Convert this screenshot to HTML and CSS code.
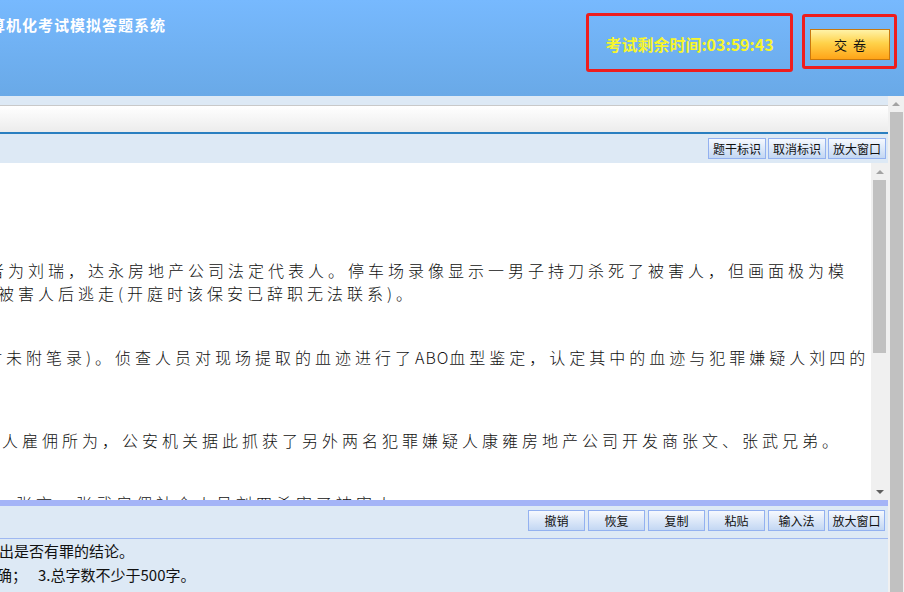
FILE: index.html
```html
<!DOCTYPE html>
<html lang="zh-CN">
<head>
  <meta charset="UTF-8" />
  <title>计算机化考试模拟答题系统</title>
  <link rel="stylesheet" href="styles.css">
</head>
<body>
  <div class="header">
    <div class="title">计算机化考试模拟答题系统</div>
    <div class="header-right">
      <div class="timer">考试剩余时间:03:59:43</div>
      <div class="submit-box">
        <button class="submit">交 卷</button>
      </div>
    </div>
  </div>

  <div class="main">
    <div class="page">
      <div class="strip"></div>
      <div class="tabbar"></div>

      <div class="toolbar top">
        <button class="tool">题干标识</button>
        <button class="tool">取消标识</button>
        <button class="tool">放大窗口</button>
      </div>

      <div class="question">
        <div class="qtext">
          <p class="l1">者为刘瑞，达永房地产公司法定代表人。停车场录像显示一男子持刀杀死了被害人，但画面极为模</p>
          <p class="l2">被害人后逃走(开庭时该保安已辞职无法联系)。</p>
          <p class="l3">时未附笔录)。侦查人员对现场提取的血迹进行了<span class="latin">ABO</span>血型鉴定，认定其中的血迹与犯罪嫌疑人刘四的</p>
          <p class="l4">人雇佣所为，公安机关据此抓获了另外两名犯罪嫌疑人康雍房地产公司开发商张文、张武兄弟。</p>
          <p class="l5">张文、张武雇佣社会人员刘四杀害了被害人。</p>
        </div>
        <div class="vscroll inner">
          <div class="arrow"><span class="tri up"></span></div>
          <div class="thumb"></div>
          <div class="track"></div>
          <div class="arrow"><span class="tri down"></span></div>
        </div>
      </div>

      <div class="answer-sep"></div>

      <div class="toolbar bottom">
        <button class="tool">撤销</button>
        <button class="tool">恢复</button>
        <button class="tool">复制</button>
        <button class="tool">粘贴</button>
        <button class="tool">输入法</button>
        <button class="tool">放大窗口</button>
      </div>

      <div class="hint">
        <p class="h1">出是否有罪的结论。</p>
        <p class="h2">确；<span class="num">3.总字数不少于500字。</span></p>
      </div>
    </div>

    <div class="vscroll outer">
      <div class="arrow"><span class="tri up"></span></div>
      <div class="thumb"></div>
    </div>
  </div>
</body>
</html>
```

FILE: styles.css
```css
* {
  box-sizing: border-box;
}
body {
  margin: 0;
  width: 904px;
  height: 592px;
  overflow: hidden;
  font-family: "Noto Sans CJK SC", "Liberation Sans", sans-serif;
  background: #dde9f5;
}
p {
  margin: 0;
}

/* header */
.header {
  height: 96px;
  display: flex;
  align-items: flex-start;
  padding-right: 7px;
  background: linear-gradient(#77b9fe, #69a9e7);
  overflow: hidden;
}
.title {
  margin-left: -26px;
  padding-top: 14px;
  color: #fff;
  font-size: 15px;
  font-weight: bold;
  letter-spacing: 1px;
  line-height: 22px;
  white-space: nowrap;
}
.header-right {
  margin-left: auto;
  display: flex;
  align-items: flex-start;
  gap: 9px;
}
.timer {
  margin-top: 13px;
  width: 207px;
  height: 59px;
  padding-top: 3px;
  border: 3px solid #ee1d1d;
  border-radius: 3px;
  display: flex;
  align-items: center;
  justify-content: center;
  color: #f7f52c;
  font-size: 16px;
  font-weight: bold;
  white-space: nowrap;
}
.submit-box {
  margin-top: 14px;
  width: 95px;
  height: 55px;
  padding: 12px 0 0 5px;
  border: 3px solid #ee1d1d;
  border-radius: 3px;
}
.submit {
  width: 80px;
  height: 31px;
  padding: 0;
  border: 1px solid #c9780e;
  background: linear-gradient(#fff3a8, #ffd24a 45%, #ffa418);
  font-family: inherit;
  font-size: 13px;
  word-spacing: 3px;
  color: #111;
}

/* main area */
.main {
  display: flex;
  height: 496px;
}
.page {
  flex: 1;
  display: flex;
  flex-direction: column;
  overflow: hidden;
}
.strip {
  height: 9px;
  background: #dde9f5;
}
.tabbar {
  height: 29px;
  border-top: 1px solid #c9c9c9;
  border-bottom: 2px solid #2a7fc0;
  background: linear-gradient(#ffffff, #ececec);
}
.toolbar {
  display: flex;
  justify-content: flex-end;
  align-items: center;
  background: #dde9f5;
}
.toolbar.top {
  height: 29px;
  gap: 2px;
  padding-right: 2px;
}
.toolbar.bottom {
  height: 33px;
  gap: 3px;
  padding: 0 3px 3px 0;
  border-bottom: 1px solid #9fb8f1;
}
.tool {
  width: 58px;
  height: 21px;
  padding: 0;
  border: 1px solid #93b1f0;
  background: linear-gradient(#f6f9fe, #c3d7f3);
  font-family: inherit;
  font-size: 12px;
  color: #111;
}
.toolbar.bottom .tool {
  width: 57px;
}

/* question text */
.question {
  height: 337px;
  display: flex;
}
.qtext {
  flex: 1;
  background: #fff;
  overflow: hidden;
  padding-top: 96px;
  font-size: 16px;
  font-weight: 300;
  letter-spacing: 4px;
  line-height: 23px;
  color: #111;
}
.qtext p {
  white-space: nowrap;
}
.qtext .latin {
  letter-spacing: 1px;
}
.l1 { margin-left: -12px; }
.l2 { margin-left: -2px; }
.l3 { margin-left: -14px; margin-top: 41px; }
.l4 { margin-left: 2px; margin-top: 60px; }
.l5 { margin-left: 16px; margin-top: 40px; }

.answer-sep {
  height: 6px;
  background: #a4b4f7;
}
.hint {
  flex: 1;
  background: #dde9f5;
  font-size: 15px;
  line-height: 24px;
  color: #111;
}
.hint p {
  white-space: nowrap;
}
.h1 { margin-left: -1px; }
.h2 { margin-left: -3px; }
.hint .num {
  margin-left: 11px;
}

/* scrollbars */
.vscroll {
  display: flex;
  flex-direction: column;
  background: #f0f0f0;
}
.vscroll.inner {
  width: 17px;
}
.vscroll.outer {
  width: 16px;
}
.arrow {
  height: 17px;
  display: flex;
  align-items: center;
  justify-content: center;
}
.outer .arrow {
  height: 16px;
}
.tri {
  width: 0;
  height: 0;
  border-left: 4px solid transparent;
  border-right: 4px solid transparent;
}
.tri.up {
  border-bottom: 4px solid #a3a3a3;
}
.tri.down {
  border-top: 4px solid #606060;
}
.inner .thumb {
  height: 173px;
  margin: 0 2px;
  background: #c1c1c1;
}
.inner .track {
  flex: 1;
}
.outer .thumb {
  flex: 1;
  margin: 0 1px 0 2px;
  background: #c1c1c1;
}
```
